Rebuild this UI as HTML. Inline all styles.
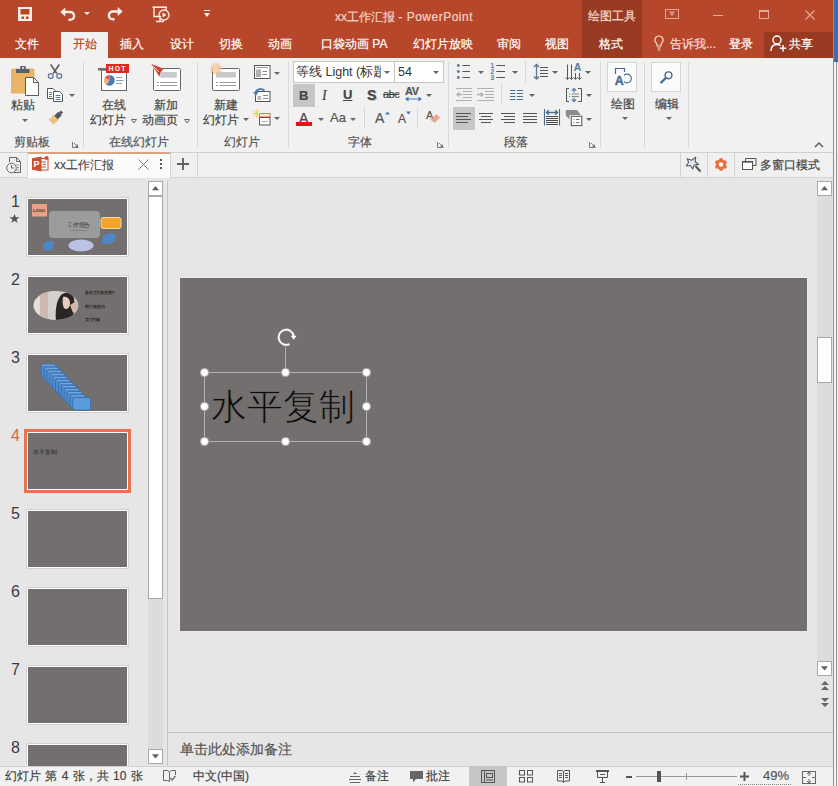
<!DOCTYPE html>
<html><head><meta charset="utf-8">
<style>
*{margin:0;padding:0;box-sizing:border-box}
html,body{width:838px;height:786px;overflow:hidden;background:#e6e6e6;font-family:"Liberation Sans",sans-serif;font-size:12px;color:#444}
.a{position:absolute}
svg{position:absolute;overflow:visible}
.t{position:absolute;white-space:nowrap;line-height:1}
#title{left:0;top:0;width:833px;height:58px;background:#b7472a}
.tab{position:absolute;top:37px;color:#fff;font-size:12px;line-height:14px;white-space:nowrap}
#ribbon{left:0;top:58px;width:833px;height:94px;background:#f1f1f1}
.sep{position:absolute;top:62px;width:1px;height:86px;background:#dadada}
.gl{position:absolute;top:135px;font-size:12px;line-height:14px;color:#555;white-space:nowrap}
.rl{position:absolute;font-size:12px;line-height:14px;color:#444;white-space:nowrap}
.dd{position:absolute;width:0;height:0;border-left:3px solid transparent;border-right:3px solid transparent;border-top:3px solid #666}
.sl{position:absolute;top:769px;font-size:12px;line-height:14px;color:#444;white-space:nowrap}
.th{position:absolute;left:26px;width:103px;height:60px;background:#736f6e;border:1px solid #d2d2d2;box-shadow:inset 0 0 0 1px #fff}
.num{position:absolute;left:11px;font-size:16px;line-height:16px;color:#3c3c3c}
.tab,.gl,.rl,.sl,.t{-webkit-text-stroke:0.2px currentColor}
.ns{-webkit-text-stroke:0 !important}
</style></head><body>
<!-- ============ TITLE BAR ============ -->
<div id="title" class="a"></div>
<div class="a" style="left:582px;top:0;width:60px;height:58px;background:#983b22"></div>
<div class="a" style="left:764px;top:32px;width:69px;height:26px;background:#983b22"></div>
<!-- right window edge -->
<div class="a" style="left:833px;top:0;width:1px;height:786px;background:#8f8f8f"></div>
<div class="a" style="left:834px;top:0;width:4px;height:62px;background:#3f6ea8"></div>
<div class="a" style="left:834px;top:62px;width:4px;height:724px;background:#f4f4f4"></div>
<div class="a" style="left:836px;top:62px;width:1px;height:724px;background:#8f8f8f"></div>

<!-- QAT: save -->
<svg style="left:18px;top:7px" width="14" height="14" viewBox="0 0 14 14">
 <rect x="0" y="0" width="14" height="14" fill="#fbeee9"/>
 <rect x="2.5" y="2" width="9" height="5.5" fill="#b7472a"/>
 <rect x="3.5" y="9.5" width="2.5" height="2.5" fill="#b7472a"/>
 <rect x="8" y="9.5" width="2.5" height="2.5" fill="#b7472a"/>
</svg>
<!-- undo -->
<svg style="left:60px;top:7px" width="16" height="14" viewBox="0 0 16 14">
 <path d="M4,5H10.2A3.9,3.9 0 0 1 10.2,12.8H8.5" fill="none" stroke="#fbeee9" stroke-width="2.4"/>
 <path d="M0.3,5L5.3,0.5V9.5Z" fill="#fbeee9"/>
</svg>
<div class="dd" style="left:84px;top:12px;border-top-color:#fbeee9"></div>
<!-- redo -->
<svg style="left:107px;top:7px" width="16" height="14" viewBox="0 0 16 14">
 <path d="M12,4.5H5.8A3.9,3.9 0 0 0 5.8,12.3H7.5" fill="none" stroke="#fbeee9" stroke-width="2.4"/>
 <path d="M15.7,4.5L10.7,0V9Z" fill="#fbeee9"/>
</svg>
<!-- slideshow from start -->
<svg style="left:152px;top:6px" width="18" height="17" viewBox="0 0 18 17">
 <path d="M0.5,1.2H15" stroke="#fbeee9" stroke-width="1.6"/>
 <path d="M2,1.5V10.5H9" fill="none" stroke="#fbeee9" stroke-width="1.3"/>
 <path d="M14,1.5V5" fill="none" stroke="#fbeee9" stroke-width="1.3"/>
 <circle cx="12" cy="9" r="5" fill="none" stroke="#fbeee9" stroke-width="1.3"/>
 <path d="M10.5,6.5L14.5,9L10.5,11.5Z" fill="#fbeee9"/>
 <path d="M8,11V15M4,15.5H12" stroke="#fbeee9" stroke-width="1.3"/>
</svg>
<!-- customize QAT -->
<svg style="left:204px;top:10px" width="6" height="8" viewBox="0 0 6 8">
 <path d="M0,0.5H6" stroke="#fbeee9" stroke-width="1"/>
 <path d="M0,3H6L3,7Z" fill="#fbeee9"/>
</svg>

<div class="t" style="left:335px;top:9.5px;font-size:12px;line-height:14px;color:#f6d5ca">xx工作汇报 <span style="letter-spacing:0.5px">- PowerPoint</span></div>
<div class="t" style="left:588px;top:9px;font-size:12px;line-height:14px;color:#f6dcd3">绘图工具</div>

<!-- window controls -->
<svg style="left:665px;top:9px" width="14" height="10" viewBox="0 0 14 10">
 <rect x="0.5" y="0.5" width="13" height="9" fill="none" stroke="#e7a493" stroke-width="1"/>
 <path d="M4,3H10M7,3V7M5,5H9" stroke="#e7a493" stroke-width="1"/>
</svg>
<div class="a" style="left:713px;top:15px;width:10px;height:1px;background:#eaa897"></div>
<div class="a" style="left:759px;top:10px;width:10px;height:9px;border:1px solid #eaa897;border-top-width:2px"></div>
<svg style="left:805px;top:10px" width="10" height="10" viewBox="0 0 10 10">
 <path d="M0.5,0.5L9.5,9.5M9.5,0.5L0.5,9.5" stroke="#eaa897" stroke-width="1.2"/>
</svg>

<!-- ============ TABS ============ -->
<div class="tab" style="left:15px">文件</div>
<div class="a" style="left:61px;top:32px;width:47px;height:26px;background:#f1f1f1"></div>
<div class="tab" style="left:73px;color:#b7472a">开始</div>
<div class="tab" style="left:120px">插入</div>
<div class="tab" style="left:170px">设计</div>
<div class="tab" style="left:219px">切换</div>
<div class="tab" style="left:268px">动画</div>
<div class="tab" style="left:321px">口袋动画 PA</div>
<div class="tab" style="left:413px">幻灯片放映</div>
<div class="tab" style="left:497px">审阅</div>
<div class="tab" style="left:545px">视图</div>
<div class="tab" style="left:599px">格式</div>
<!-- lightbulb -->
<svg style="left:654px;top:35px" width="10" height="16" viewBox="0 0 10 16">
 <path d="M5,1A4,4 0 0 0 2.2,7.9C3,8.8 3.2,9.6 3.2,11H6.8C6.8,9.6 7,8.8 7.8,7.9A4,4 0 0 0 5,1Z" fill="none" stroke="#f6dcd3" stroke-width="1.2"/>
 <path d="M3.2,13H6.8M3.8,15H6.2" stroke="#f6dcd3" stroke-width="1.2"/>
</svg>
<div class="tab" style="left:670px;color:#f6dcd3">告诉我...</div>
<div class="tab" style="left:729px">登录</div>
<!-- share person icon -->
<svg style="left:770px;top:35px" width="17" height="17" viewBox="0 0 17 17">
 <circle cx="7" cy="5" r="4" fill="none" stroke="#fff" stroke-width="1.5"/>
 <path d="M1,16C1,11.5 3.5,9.5 7,9.5C8.5,9.5 9.5,9.8 10.5,10.5" fill="none" stroke="#fff" stroke-width="1.5"/>
 <path d="M13,10V16.5M9.8,13.2H16.2" stroke="#fff" stroke-width="1.5"/>
</svg>
<div class="tab" style="left:789px">共享</div>

<!-- ============ RIBBON ============ -->
<div id="ribbon" class="a"></div>
<div class="sep" style="left:83px"></div>
<div class="sep" style="left:197px"></div>
<div class="sep" style="left:288px"></div>
<div class="sep" style="left:448px"></div>
<div class="sep" style="left:600px"></div>
<div class="sep" style="left:644px"></div>
<div class="sep" style="left:688px"></div>
<div class="gl" style="left:14px">剪贴板</div>
<div class="gl" style="left:109px">在线幻灯片</div>
<div class="gl" style="left:224px">幻灯片</div>
<div class="gl" style="left:348px">字体</div>
<div class="gl" style="left:504px">段落</div>
<!-- clipboard group -->
<svg style="left:11px;top:66px" width="29" height="30" viewBox="0 0 29 30">
 <path d="M0,4.5Q0,2.5 2,2.5H21.5Q23.5,2.5 23.5,4.5V27.5H0Z" fill="#e9b466"/>
 <path d="M5,3H18.5V7H5Z" fill="#55626f"/>
 <path d="M9.3,0H14.7V3.5H9.3Z" fill="#55626f"/>
 <rect x="11" y="1.2" width="2" height="1.6" fill="#f1f1f1"/>
 <path d="M14.5,11.5H22.5L27.5,16.5V29.5H14.5Z" fill="#fff" stroke="#5a5a5a" stroke-width="1"/>
 <path d="M22.5,11.5V16.5H27.5" fill="none" stroke="#5a5a5a" stroke-width="1"/>
</svg>
<div class="rl" style="left:11px;top:98px">粘贴</div>
<div class="dd" style="left:22px;top:119px"></div>
<!-- scissors -->
<svg style="left:48px;top:64px" width="15" height="15" viewBox="0 0 15 15">
 <path d="M2.7,0.5L8.8,9.5M11.3,0.5L5.2,9.5" stroke="#5a5a5a" stroke-width="1.5"/>
 <circle cx="2.8" cy="12" r="2.4" fill="#f1f1f1" stroke="#5d7894" stroke-width="1.3"/>
 <circle cx="11.2" cy="12" r="2.4" fill="#f1f1f1" stroke="#5d7894" stroke-width="1.3"/>
</svg>
<!-- copy -->
<svg style="left:47px;top:88px" width="16" height="14" viewBox="0 0 16 14">
 <path d="M0.5,0.5H6L8,2.5V10.5H0.5Z" fill="#fff" stroke="#555" stroke-width="1"/>
 <path d="M6.5,3.5H12.5L15.5,6.5V13.5H6.5Z" fill="#fff" stroke="#555" stroke-width="1"/>
 <path d="M2,4.5H5M2,6.5H5M2,8.5H5" stroke="#777" stroke-width="1"/><path d="M8.5,7.5H13.5M8.5,9.5H13.5M8.5,11.5H13.5" stroke="#4a7cb5" stroke-width="1"/>
</svg>
<div class="dd" style="left:69px;top:94px"></div>
<!-- format painter -->
<svg style="left:48px;top:110px" width="15" height="15" viewBox="0 0 15 15">
 <path d="M14,1.5L12,3.5" stroke="#50565f" stroke-width="3"/>
 <path d="M7.5,11.5L3.5,7.5L7.5,3.5L11.5,7.5Z" fill="none"/>
 <path d="M8.2,7.2L3.2,12.2" stroke="#ebc47c" stroke-width="7"/>
 <path d="M12,3.5L8,7.5" stroke="#50565f" stroke-width="5"/>
</svg>
<svg style="left:72px;top:142px" width="7" height="6" viewBox="0 0 7 6">
 <path d="M0.5,0V5.5H6.5" fill="none" stroke="#777" stroke-width="1"/>
 <path d="M2,1L6,5" stroke="#777" stroke-width="1"/><path d="M6,2V5H3Z" fill="#777"/>
</svg>

<!-- online slides group -->
<svg style="left:100px;top:63px" width="30" height="29" viewBox="0 0 30 29">
 <rect x="1.5" y="7" width="25" height="20.5" fill="#fff" stroke="#666" stroke-width="1"/>
 <rect x="-2" y="5" width="10" height="2.5" fill="#6b6f72"/>
 <rect x="6" y="1" width="23" height="9" fill="#e02a1f"/>
 <text x="17.6" y="8.2" font-family="Liberation Sans" font-size="6.8" font-weight="bold" fill="#fff" text-anchor="middle" letter-spacing="1.3">HOT</text>
 <path d="M9.4,17.3L9.40,11.90A5.4,5.4 0 1 1 6.30,21.72Z" fill="#4a7cb5"/>
 <path d="M9.4,17.3L6.30,21.72A5.4,5.4 0 0 1 4.72,14.60Z" fill="#eab07a"/>
 <path d="M9.4,17.3L4.72,14.60A5.4,5.4 0 0 1 9.40,11.90Z" fill="#e0593c"/>
 <path d="M16,14.5H22M16,17.5H23.5M16,20.5H22" stroke="#8aa0b8" stroke-width="1"/>
</svg>
<div class="rl" style="left:102px;top:98px">在线</div>
<div class="rl" style="left:90px;top:113px">幻灯片</div>
<svg style="left:131px;top:119px" width="6" height="5" viewBox="0 0 6 5"><path d="M0.5,0.5H5.5L3,4Z" fill="none" stroke="#666" stroke-width="1"/></svg>
<svg style="left:150px;top:63px" width="32" height="29" viewBox="0 0 32 29">
 <rect x="3.5" y="5.5" width="27" height="22" rx="1" fill="#fff" stroke="#666" stroke-width="1"/>
 <rect x="10.3" y="9" width="16.5" height="5.7" fill="#cacbd0"/>
 <path d="M6.8,19.5H8.8M10,19.5H27M6.8,22.5H8.8M10,22.5H27" stroke="#9a9a9a" stroke-width="1"/>
 <path d="M1.3,1L13.7,5.8L10.5,9.5L9.4,13.7Z" fill="#c8472d"/>
 <path d="M3.2,3.2L8.8,9" stroke="#fff" stroke-width="0.8"/>
</svg>
<div class="rl" style="left:154px;top:98px">新加</div>
<div class="rl" style="left:142px;top:113px">动画页</div>
<svg style="left:184px;top:119px" width="6" height="5" viewBox="0 0 6 5"><path d="M0.5,0.5H5.5L3,4Z" fill="none" stroke="#666" stroke-width="1"/></svg>

<!-- slides group -->
<svg style="left:209px;top:62px" width="32" height="30" viewBox="0 0 32 30">
 <rect x="3.5" y="6.5" width="27" height="22" rx="1" fill="#fff" stroke="#666" stroke-width="1"/>
 <rect x="7" y="10" width="20" height="5.5" fill="#c9c9c9"/>
 <path d="M7,20.5H9M10.5,20.5H27M7,23.5H9M10.5,23.5H27" stroke="#999" stroke-width="1"/>
 <path d="M9.50,7.00L13.30,7.00 M9.17,8.25L12.46,10.15 M8.25,9.17L10.15,12.46 M7.00,9.50L7.00,13.30 M5.75,9.17L3.85,12.46 M4.83,8.25L1.54,10.15 M4.50,7.00L0.70,7.00 M4.83,5.75L1.54,3.85 M5.75,4.83L3.85,1.54 M7.00,4.50L7.00,0.70 M8.25,4.83L10.15,1.54 M9.17,5.75L12.46,3.85" stroke="#f2bd8c" stroke-width="1.2"/>
 <circle cx="7" cy="7" r="2.8" fill="#f9d2a8"/>
</svg>
<div class="rl" style="left:214px;top:98px">新建</div>
<div class="rl" style="left:203px;top:113px">幻灯片</div>
<div class="dd" style="left:243px;top:118px"></div>
<!-- layout -->
<svg style="left:254px;top:65px" width="17" height="15" viewBox="0 0 17 15">
 <rect x="0.5" y="0.5" width="15.5" height="13" fill="#fff" stroke="#555" stroke-width="1"/>
 <path d="M2.5,2.5H14" stroke="#999" stroke-width="1"/>
 <rect x="2" y="4.5" width="5" height="7.5" fill="#b0b0b0"/>
 <path d="M8.5,6.5H13M8.5,9.5H13" stroke="#888" stroke-width="1"/>
</svg>
<div class="dd" style="left:274px;top:72px"></div>
<!-- reset -->
<svg style="left:253px;top:87px" width="18" height="15" viewBox="0 0 18 15">
 <rect x="2.5" y="4.5" width="14.5" height="10" fill="#fff" stroke="#555" stroke-width="1"/>
 <rect x="4.5" y="9" width="3.5" height="4" fill="#b5b5b5"/>
 <path d="M10,8.5H15M10,11.5H15" stroke="#888" stroke-width="1"/>
 <rect x="1" y="0" width="12" height="4" fill="#f1f1f1"/>
 <path d="M2.5,6.5C3,2.5 7.5,0.5 11.5,3.5" fill="none" stroke="#4a7cb5" stroke-width="1.8"/>
 <path d="M0,5.5L3,9L5.5,4.5Z" fill="#4a7cb5"/>
</svg>
<!-- section -->
<svg style="left:253px;top:109px" width="18" height="18" viewBox="0 0 18 18">
 <rect x="6.5" y="4.5" width="10.5" height="3.5" fill="#fbe6cf" stroke="#e0704e" stroke-width="1"/>
 <rect x="6.5" y="8.5" width="10.5" height="7.5" fill="#fff" stroke="#555" stroke-width="1"/>
 <path d="M8.5,12.5H15" stroke="#aaa" stroke-width="1"/>
 <path d="M4.90,4.50L7.50,4.50 M4.49,5.49L6.33,7.33 M3.50,5.90L3.50,8.50 M2.51,5.49L0.67,7.33 M2.10,4.50L-0.50,4.50 M2.51,3.51L0.67,1.67 M3.50,3.10L3.50,0.50 M4.49,3.51L6.33,1.67" stroke="#f2c46a" stroke-width="1"/>
 <circle cx="3.5" cy="4.5" r="1.5" fill="#f5d070"/>
</svg>
<div class="dd" style="left:274px;top:117px"></div>

<!-- font group -->
<div class="a" style="left:293px;top:61px;width:102px;height:22px;background:#fff;border:1px solid #c6c6c6"></div>
<div class="a" style="left:394px;top:61px;width:50px;height:22px;background:#fff;border:1px solid #c6c6c6"></div>
<div class="rl ns" style="left:296px;top:65px;font-size:12.5px;color:#333">等线 Light (标题</div>
<div class="a" style="left:381px;top:62px;width:13px;height:20px;background:#fff"></div>
<div class="dd" style="left:384px;top:71px"></div>
<div class="rl ns" style="left:398px;top:65px;font-size:12.5px;color:#333">54</div>
<div class="dd" style="left:433px;top:71px"></div>
<!-- row 2 -->
<div class="a" style="left:293px;top:84px;width:22px;height:23px;background:#c6c6c6"></div>
<div class="t" style="left:299px;top:89px;font-size:13px;font-weight:bold;color:#444">B</div>
<div class="t" style="left:322px;top:89px;font-size:14px;font-family:'Liberation Serif';font-style:italic;color:#444">I</div>
<div class="t" style="left:343px;top:88px;font-size:13px;font-weight:bold;color:#444;text-decoration:underline">U</div>
<div class="t" style="left:367px;top:88px;font-size:14px;font-weight:bold;color:#444;text-shadow:1px 1px 0 #bbb">S</div>
<div class="t" style="left:383px;top:89px;font-size:11px;color:#444;letter-spacing:-0.5px;text-decoration:line-through">abc</div>
<div class="t" style="left:405px;top:86px;font-size:11px;font-weight:bold;color:#555;letter-spacing:-0.5px">AV</div>
<svg style="left:405px;top:96px" width="17" height="6" viewBox="0 0 17 6">
 <path d="M1,3H16" stroke="#4a7cb5" stroke-width="1"/><path d="M0,3L3.5,0.5V5.5ZM17,3L13.5,0.5V5.5Z" fill="#4a7cb5"/>
</svg>
<div class="dd" style="left:426px;top:94px"></div>
<!-- row 3 -->
<div class="t" style="left:299px;top:111px;font-size:14px;color:#444">A</div>
<div class="a" style="left:296px;top:122px;width:16px;height:4px;background:#e8101a"></div>
<div class="dd" style="left:318px;top:118px"></div>
<div class="t" style="left:330px;top:111px;font-size:13px;color:#555">Aa</div>
<div class="dd" style="left:350px;top:118px"></div>
<div class="a" style="left:364px;top:108px;width:1px;height:20px;background:#d8d8d8"></div>
<div class="t" style="left:375px;top:111px;font-size:14px;color:#555">A</div>
<svg style="left:385px;top:111px" width="5" height="4" viewBox="0 0 5 4"><path d="M0,3.5L2.5,0.5L5,3.5Z" fill="#4a7cb5"/></svg>
<div class="t" style="left:398px;top:113px;font-size:12px;color:#555">A</div>
<svg style="left:406px;top:111px" width="5" height="4" viewBox="0 0 5 4"><path d="M0,0.5H5L2.5,3.5Z" fill="#4a7cb5"/></svg>
<div class="a" style="left:417px;top:108px;width:1px;height:20px;background:#d8d8d8"></div>
<div class="t" style="left:426px;top:110px;font-size:11px;color:#555">A</div>
<svg style="left:428px;top:110px" width="13" height="13" viewBox="0 0 13 13">
 <path d="M3,9.5L8.5,4L12,7.5L6.5,13Z" fill="#e9a58c"/>
 <path d="M4.5,11L2,8.5L5,5.5" fill="none" stroke="#e9a58c" stroke-width="1"/>
</svg>
<svg style="left:437px;top:142px" width="7" height="6" viewBox="0 0 7 6">
 <path d="M0.5,0V5.5H6.5" fill="none" stroke="#777" stroke-width="1"/>
 <path d="M2,1L6,5" stroke="#777" stroke-width="1"/><path d="M6,2V5H3Z" fill="#777"/>
</svg>

<!-- paragraph group -->
<svg style="left:456px;top:64px" width="16" height="16" viewBox="0 0 16 16">
 <g fill="#5a7894"><circle cx="2.3" cy="1.5" r="1.4"/><circle cx="2.3" cy="7.5" r="1.4"/><circle cx="2.3" cy="13.5" r="1.4"/></g>
 <path d="M6.4,1.5H14M6.4,7.5H14M6.4,13.5H14" stroke="#555" stroke-width="1"/>
</svg>
<div class="dd" style="left:478px;top:71px"></div>
<svg style="left:490px;top:64px" width="16" height="17" viewBox="0 0 16 17">
 <g font-family="Liberation Sans" font-size="6.5" font-weight="bold" fill="#5a7894">
 <text x="0.6" y="4">1</text><text x="0.6" y="10">2</text><text x="0.6" y="16">3</text></g>
 <path d="M6.3,1.5H15M6.3,7.5H15M6.3,13.5H15" stroke="#555" stroke-width="1"/>
</svg>
<div class="dd" style="left:512px;top:71px"></div>
<div class="a" style="left:525px;top:61px;width:1px;height:22px;background:#d8d8d8"></div>
<svg style="left:533px;top:63px" width="16" height="18" viewBox="0 0 16 18">
 <path d="M3.5,1.5V16" stroke="#5a7894" stroke-width="1.3"/>
 <path d="M1,4L3.5,1.5L6,4M1,13.5L3.5,16L6,13.5" fill="none" stroke="#5a7894" stroke-width="1.3"/>
 <path d="M7,4.5H15M7,7.5H15M7,10.5H15M7,13.5H15" stroke="#555" stroke-width="1"/>
</svg>
<div class="dd" style="left:552px;top:71px"></div>
<svg style="left:565px;top:63px" width="17" height="18" viewBox="0 0 17 18">
 <text x="8.8" y="8.4" font-family="Liberation Sans" font-size="10.5" font-weight="bold" fill="#5a7894">A</text>
 <path d="M2.5,1.5V16M6.5,1.5V16M10.5,10V16M14.5,10V16" stroke="#555" stroke-width="1"/>
 <path d="M0.8,14.5L2.5,16.5L4.2,14.5M4.8,14.5L6.5,16.5L8.2,14.5M8.8,14.5L10.5,16.5L12.2,14.5M12.8,14.5L14.5,16.5L16.2,14.5" fill="none" stroke="#555" stroke-width="1"/>
</svg>
<div class="dd" style="left:585px;top:71px"></div>
<!-- row2 -->
<svg style="left:456px;top:87px" width="16" height="15" viewBox="0 0 16 15">
 <path d="M0,1.5H16M7,4.5H16M7,7.5H16M7,10.5H16M0,13.5H16" stroke="#b0b0b0" stroke-width="1"/>
 <path d="M2,7.5H6" stroke="#b0b0b0" stroke-width="1.6"/><path d="M0,7.5L3.2,4.8V10.2Z" fill="#b0b0b0"/>
</svg>
<svg style="left:477px;top:87px" width="17" height="15" viewBox="0 0 17 15">
 <path d="M0,1.5H17M8,4.5H17M8,7.5H17M8,10.5H17M0,13.5H17" stroke="#b0b0b0" stroke-width="1"/>
 <path d="M0,7.5H5" stroke="#b0b0b0" stroke-width="1.6"/><path d="M7,7.5L3.8,4.8V10.2Z" fill="#b0b0b0"/>
</svg>
<div class="a" style="left:501px;top:84px;width:1px;height:21px;background:#d8d8d8"></div>
<svg style="left:509px;top:88px" width="15" height="13" viewBox="0 0 15 13">
 <path d="M1,2.5H6.5M1,5.5H6.5M1,8.5H6.5M1,11.5H6.5M8,2.5H14M8,5.5H14M8,8.5H14M8,11.5H14" stroke="#4a6f99" stroke-width="1.2"/>
</svg>
<div class="dd" style="left:529px;top:94px"></div>
<svg style="left:565px;top:87px" width="18" height="16" viewBox="0 0 18 16">
 <path d="M4,1.5H1.5V14.5H4M13,1.5H16.5V14.5H13" fill="none" stroke="#555" stroke-width="1"/>
 <path d="M9,1.5V5.5M9,10.5V14.5" stroke="#5a7894" stroke-width="1.2"/>
 <path d="M6.8,3.7L9,1.5L11.2,3.7M6.8,12.3L9,14.5L11.2,12.3" fill="none" stroke="#5a7894" stroke-width="1.2"/>
 <path d="M4,7H5M6.5,7H14M4,9.5H5M6.5,9.5H14" stroke="#888" stroke-width="1"/>
</svg>
<div class="dd" style="left:586px;top:94px"></div>
<!-- row3 -->
<div class="a" style="left:453px;top:107px;width:22px;height:23px;background:#c6c6c6"></div>
<svg style="left:456px;top:112px" width="16" height="12" viewBox="0 0 16 12">
 <path d="M0,1.5H15M0,4.5H12M0,7.5H15M0,10.5H12" stroke="#555" stroke-width="1"/>
</svg>
<svg style="left:479px;top:112px" width="15" height="12" viewBox="0 0 15 12">
 <path d="M0,1.5H14M2,4.5H12M0,7.5H14M2,10.5H12" stroke="#555" stroke-width="1"/>
</svg>
<svg style="left:501px;top:112px" width="15" height="12" viewBox="0 0 15 12">
 <path d="M0,1.5H14M3,4.5H14M0,7.5H14M3,10.5H14" stroke="#555" stroke-width="1"/>
</svg>
<svg style="left:523px;top:112px" width="15" height="12" viewBox="0 0 15 12">
 <path d="M0,1.5H14M0,4.5H14M0,7.5H14M0,10.5H14" stroke="#555" stroke-width="1"/>
</svg>
<svg style="left:543px;top:109px" width="18" height="17" viewBox="0 0 18 17">
 <path d="M1.5,0V16.5M16.5,0V16.5" stroke="#4a6b8f" stroke-width="1.1"/>
 <path d="M3.5,3.5H14.5" stroke="#4a6b8f" stroke-width="1.5"/>
 <path d="M5.8,1.2L3.5,3.5L5.8,5.8M12.2,1.2L14.5,3.5L12.2,5.8" fill="none" stroke="#4a6b8f" stroke-width="1.4"/>
 <path d="M3,7.5H15M3,9.5H15M3,11.5H15M3,13.5H15M3,15.5H15" stroke="#4d4d4d" stroke-width="1"/>
</svg>
<svg style="left:565px;top:109px" width="18" height="17" viewBox="0 0 18 17">
 <path d="M0.8,1H12L15.8,6H4.5L4.5,10.4L0.8,6.5Z" fill="#8c8c8c"/>
 <rect x="6.3" y="7.3" width="10.5" height="9.3" fill="#fff" stroke="#555" stroke-width="1"/>
 <path d="M8.5,10.5H9.5M11,10.5H14.5M8.5,13.5H9.5M11,13.5H14.5" stroke="#777" stroke-width="1"/>
</svg>
<div class="dd" style="left:586px;top:118px"></div>
<svg style="left:589px;top:142px" width="7" height="6" viewBox="0 0 7 6">
 <path d="M0.5,0V5.5H6.5" fill="none" stroke="#777" stroke-width="1"/>
 <path d="M2,1L6,5" stroke="#777" stroke-width="1"/><path d="M6,2V5H3Z" fill="#777"/>
</svg>

<!-- drawing / editing -->
<div class="a" style="left:607px;top:62px;width:30px;height:30px;background:#fbfbfb;border:1px solid #d6d6d6"></div>
<svg style="left:614px;top:68px" width="18" height="18" viewBox="0 0 18 18">
 <path d="M1.5,6V0.5H10.5V4" fill="none" stroke="#4a6b8f" stroke-width="1.2"/>
 <circle cx="13" cy="10.5" r="4.3" fill="none" stroke="#4a6b8f" stroke-width="1.2"/>
 <rect x="1" y="7" width="9" height="11" fill="#fbfbfb"/>
 <text x="0.8" y="16.8" font-family="Liberation Sans" font-size="12.5" font-weight="bold" fill="#4a6b8f" stroke="#4a6b8f" stroke-width="0.4">A</text>
</svg>
<div class="rl" style="left:611px;top:97px">绘图</div>
<div class="dd" style="left:622px;top:117px"></div>
<div class="a" style="left:651px;top:62px;width:30px;height:30px;background:#fbfbfb;border:1px solid #d6d6d6"></div>
<svg style="left:659px;top:70px" width="14" height="14" viewBox="0 0 14 14">
 <circle cx="9.5" cy="5.3" r="3.4" fill="none" stroke="#4a6b8f" stroke-width="1.4"/>
 <path d="M6.8,8L2.2,12.5" stroke="#4a6b8f" stroke-width="2.4" stroke-linecap="round"/>
</svg>
<div class="rl" style="left:655px;top:97px">编辑</div>
<div class="dd" style="left:666px;top:117px"></div>
<svg style="left:814px;top:142px" width="10" height="6" viewBox="0 0 10 6">
 <path d="M1,5L5,1L9,5" fill="none" stroke="#555" stroke-width="1.4"/>
</svg>

<!-- RIBBON_CONTENT -->

<!-- ============ DOC BAR ============ -->
<div class="a" style="left:0;top:152px;width:833px;height:1px;background:#d0d0d0"></div>
<div class="a" style="left:0;top:153px;width:833px;height:24px;background:#f0f0f0"></div>
<div class="a" style="left:0;top:177px;width:833px;height:1px;background:#d4d4d4"></div>
<!-- history icon -->
<svg style="left:6px;top:157px" width="16" height="17" viewBox="0 0 16 17">
 <path d="M3.5,5V0.5H10.5L14.5,4.5V15.5H8" fill="none" stroke="#666" stroke-width="1"/>
 <path d="M10.5,0.5V4.5H14.5" fill="none" stroke="#666" stroke-width="1"/>
 <circle cx="5.5" cy="11" r="4.8" fill="#f0f0f0" stroke="#666" stroke-width="1"/>
 <path d="M5.5,8V11H8" fill="none" stroke="#666" stroke-width="1"/>
 <path d="M10,8H13M10,10.5H13M10,13H13" stroke="#999" stroke-width="1"/>
</svg>
<div class="a" style="left:27px;top:153px;width:1px;height:24px;background:#dcdcdc"></div>
<div class="a" style="left:28px;top:152px;width:142px;height:26px;background:#fbfbfb;border-top:2px solid #dba27f"></div>
<!-- ppt icon -->
<svg style="left:32px;top:156px" width="17" height="16" viewBox="0 0 17 16">
 <rect x="7" y="2.5" width="9" height="11.5" fill="#fff" stroke="#c9502f" stroke-width="1"/>
 <path d="M9,6H14M11,8.5H14M9,11H14" stroke="#c9502f" stroke-width="1"/>
 <path d="M0,2.3L9.5,0.5V15.5L0,13.7Z" fill="#c9502f"/>
 <text x="1.6" y="11.3" font-family="Liberation Sans" font-size="9" font-weight="bold" fill="#fff">P</text>
 <circle cx="14.5" cy="2" r="2" fill="#c9502f"/>
</svg>
<div class="t" style="left:54px;top:158px;font-size:12px;line-height:14px;color:#444;-webkit-text-stroke:0.1px #444">xx工作汇报</div>
<svg style="left:138px;top:159px" width="11" height="11" viewBox="0 0 11 11">
 <path d="M0.5,0.5L10.5,10.5M10.5,0.5L0.5,10.5" stroke="#777" stroke-width="1"/>
</svg>
<div class="a" style="left:160px;top:159px;width:2px;height:2px;background:#555"></div>
<div class="a" style="left:160px;top:163px;width:2px;height:2px;background:#555"></div>
<div class="a" style="left:160px;top:167px;width:2px;height:2px;background:#555"></div>
<div class="a" style="left:170px;top:153px;width:1px;height:24px;background:#d4d4d4"></div>
<svg style="left:177px;top:158px" width="12" height="12" viewBox="0 0 12 12">
 <path d="M6,0V12M0,6H12" stroke="#606060" stroke-width="1.9"/>
</svg>
<div class="a" style="left:197px;top:153px;width:1px;height:24px;background:#d4d4d4"></div>
<!-- right: magic wand -->
<div class="a" style="left:680px;top:153px;width:1px;height:24px;background:#d4d4d4"></div>
<svg style="left:684px;top:155px" width="18" height="18" viewBox="0 0 18 18">
 <path d="M11.5,11L16.5,16.5" stroke="#555" stroke-width="2"/>
 <path d="M3.2,3.7L7.5,5.3L11.7,2.2L11.2,6.8L14.7,9.4L10.2,10.0L8.7,14.0L6.3,10.5L2.2,11.0L4.6,7.3Z" fill="#dfe7f2" stroke="#5a5a5a" stroke-width="1.1" stroke-linejoin="round"/>
</svg>
<div class="a" style="left:707px;top:153px;width:1px;height:24px;background:#d4d4d4"></div>
<svg style="left:714px;top:158px" width="14" height="13" viewBox="0 0 14 13">
 <g fill="#e8703e"><circle cx="7" cy="6.5" r="5"/><circle cx="10.81" cy="8.70" r="2"/><circle cx="7.00" cy="10.90" r="2"/><circle cx="3.19" cy="8.70" r="2"/><circle cx="3.19" cy="4.30" r="2"/><circle cx="7.00" cy="2.10" r="2"/><circle cx="10.81" cy="4.30" r="2"/></g>
 <circle cx="7" cy="6.5" r="2.3" fill="#f4f4f4"/>
</svg>
<div class="a" style="left:734px;top:153px;width:1px;height:24px;background:#d4d4d4"></div>
<svg style="left:742px;top:157px" width="16" height="14" viewBox="0 0 16 14">
 <path d="M3.5,4V1.5H14V8.5H11" fill="none" stroke="#555" stroke-width="1"/>
 <rect x="0.5" y="4.5" width="10" height="8" fill="#fff" stroke="#555" stroke-width="1"/>
 <path d="M1,5.2H10" stroke="#555" stroke-width="1"/>
</svg>
<div class="t" style="left:760px;top:158px;font-size:12px;line-height:14px;color:#444">多窗口模式</div>

<!-- DOCBAR_CONTENT -->

<!-- ============ MAIN ============ -->
<div class="a" style="left:0;top:178px;width:833px;height:588px;background:#e6e6e6"></div>
<!-- left panel scrollbar -->
<div class="a" style="left:148px;top:181px;width:15px;height:583px;background:#dcdcdc"></div>
<div class="a" style="left:148px;top:181px;width:15px;height:15px;background:#fff;border:1px solid #a8a8a8"></div>
<svg style="left:152px;top:186px" width="7" height="5" viewBox="0 0 7 5"><path d="M0,4.3L3.5,0L7,4.3Z" fill="#606060"/></svg>
<div class="a" style="left:148px;top:196px;width:15px;height:403px;background:#fff;border:1px solid #a8a8a8"></div>
<div class="a" style="left:148px;top:749px;width:15px;height:15px;background:#fff;border:1px solid #a8a8a8"></div>
<svg style="left:152px;top:754px" width="7" height="5" viewBox="0 0 7 5"><path d="M0,0.2H7L3.5,4.5Z" fill="#606060"/></svg>

<div class="a" style="left:167px;top:181px;width:1px;height:585px;background:#c6c6c6"></div>

<!-- thumbnails -->
<div class="num" style="left:11px;top:194px">1</div>
<svg style="left:9px;top:214px" width="11" height="9" viewBox="0 0 11 9"><path d="M5.5,0L6.8,3.3H10.5L7.5,5.5L8.6,9L5.5,6.8L2.4,9L3.5,5.5L0.5,3.3H4.2Z" fill="#555"/></svg>
<div class="th" style="top:197px"></div>
<svg style="left:28px;top:199px;overflow:hidden" width="99" height="56" viewBox="1 1 99 56">
 <rect x="5" y="6" width="15" height="12.5" fill="#e9a189"/>
 <text x="6" y="13.8" font-family="Liberation Sans" font-size="4.2" font-weight="bold" fill="#3a2a25">LOGO</text>
 <rect x="22" y="13" width="51" height="27" rx="4" fill="#9b9b9b"/>
 <text x="40" y="29.3" textLength="23" lengthAdjust="spacingAndGlyphs" font-family="Liberation Sans" font-size="5.6" fill="#3a3a3a">工作报告</text>
 <path d="M43,32.5H60" stroke="#707070" stroke-width="0.8" stroke-dasharray="1.5 0.5"/>
 <rect x="74" y="19.5" width="20" height="11" rx="2" fill="#f5a42a" stroke="#f3d9a6" stroke-width="1"/>
 <path d="M76,38C81,34 90,34 89,40C88,46 79,47 75,45Z" fill="#4f86c6"/>
 <path d="M27,42C27,47 26,53 21,53C17.5,53 16,50.5 16,48C16,44.5 19,43 21.5,43.2C23.5,43.3 25.5,43 27,42Z" fill="#4f86c6"/>
 <ellipse cx="54" cy="47.5" rx="12.5" ry="6" fill="#bcc2e6"/>
</svg>

<div class="num" style="left:11px;top:272px">2</div>
<div class="th" style="top:275px"></div>
<svg style="left:28px;top:277px;overflow:hidden" width="99" height="56" viewBox="1 2 99 56">
 <defs><clipPath id="ec"><ellipse cx="28.9" cy="30.4" rx="22.5" ry="14.5"/></clipPath>
 <linearGradient id="eg" x1="0" x2="1"><stop offset="0" stop-color="#e4e2e2"/><stop offset="1" stop-color="#c4bfbe"/></linearGradient></defs>
 <ellipse cx="28.9" cy="30.4" rx="22.5" ry="14.5" fill="url(#eg)"/>
 <g clip-path="url(#ec)">
  <rect x="13" y="12" width="8" height="34" fill="#cdb9b0"/>
  <rect x="21" y="12" width="6" height="34" fill="#d6cfcb"/>
  <path d="M29,46C28,37 29,26 34,20C39,16 46,17 47,24C48,31 47,38 45,46Z" fill="#2b2526"/>
  <path d="M36,22C40,21 43,24 43,28C43,32 41,34 38.5,34C36,33 35,29 36,22Z" fill="#e6cbbf"/>
  <path d="M43,30L48,27L50,33L46,38Z" fill="#d9b3a3"/>
 </g>
 <g font-family="Liberation Sans" font-size="4" font-weight="bold" fill="#2e2a2a">
  <text x="58" y="18.8" textLength="30" lengthAdjust="spacingAndGlyphs">题设文字描述图片</text>
  <text x="58" y="32.5" textLength="20" lengthAdjust="spacingAndGlyphs">图片描述内</text>
  <text x="58" y="46" textLength="15" lengthAdjust="spacingAndGlyphs">文字描</text>
 </g>
</svg>

<div class="num" style="left:11px;top:350px">3</div>
<div class="th" style="top:353px"></div>
<svg style="left:28px;top:355px;overflow:hidden" width="99" height="56" viewBox="1 1 99 56">
<g stroke="#3467a3" stroke-width="0.7">
<rect x="14.00" y="10.00" width="15" height="13" rx="1.5" fill="#4f8ccf"/>
<path d="M15.50,11.20H28.00" stroke="#8fb6e2" stroke-width="0.7"/>
<rect x="16.90" y="13.05" width="15" height="13" rx="1.5" fill="#4f8ccf"/>
<path d="M18.40,14.25H30.90" stroke="#8fb6e2" stroke-width="0.7"/>
<rect x="19.80" y="16.10" width="15" height="13" rx="1.5" fill="#4f8ccf"/>
<path d="M21.30,17.30H33.80" stroke="#8fb6e2" stroke-width="0.7"/>
<rect x="22.70" y="19.15" width="15" height="13" rx="1.5" fill="#4f8ccf"/>
<path d="M24.20,20.35H36.70" stroke="#8fb6e2" stroke-width="0.7"/>
<rect x="25.60" y="22.20" width="15" height="13" rx="1.5" fill="#4f8ccf"/>
<path d="M27.10,23.40H39.60" stroke="#8fb6e2" stroke-width="0.7"/>
<rect x="28.50" y="25.25" width="15" height="13" rx="1.5" fill="#4f8ccf"/>
<path d="M30.00,26.45H42.50" stroke="#8fb6e2" stroke-width="0.7"/>
<rect x="31.40" y="28.30" width="15" height="13" rx="1.5" fill="#4f8ccf"/>
<path d="M32.90,29.50H45.40" stroke="#8fb6e2" stroke-width="0.7"/>
<rect x="34.30" y="31.35" width="15" height="13" rx="1.5" fill="#4f8ccf"/>
<path d="M35.80,32.55H48.30" stroke="#8fb6e2" stroke-width="0.7"/>
<rect x="37.20" y="34.40" width="15" height="13" rx="1.5" fill="#4f8ccf"/>
<path d="M38.70,35.60H51.20" stroke="#8fb6e2" stroke-width="0.7"/>
<rect x="40.10" y="37.45" width="15" height="13" rx="1.5" fill="#4f8ccf"/>
<path d="M41.60,38.65H54.10" stroke="#8fb6e2" stroke-width="0.7"/>
<rect x="43.00" y="40.50" width="15" height="13" rx="1.5" fill="#4f8ccf"/>
<path d="M44.50,41.70H57.00" stroke="#8fb6e2" stroke-width="0.7"/>
<rect x="45.7" y="43.6" width="17.8" height="12.5" rx="2" fill="#5b9bdc"/>
</g>
</svg>

<div class="num" style="left:11px;top:428px;color:#d8663f">4</div>
<div class="th" style="top:431px"></div>
<div class="a" style="left:24px;top:429px;width:107px;height:64px;border:3px solid #e8714f"></div>
<div class="t ns" style="left:33px;top:449.5px;font-size:5.7px;color:#222">水平复制</div>

<div class="num" style="left:11px;top:506px">5</div>
<div class="th" style="top:509px"></div>
<div class="num" style="left:11px;top:584px">6</div>
<div class="th" style="top:587px"></div>
<div class="num" style="left:11px;top:662px">7</div>
<div class="th" style="top:665px"></div>
<div class="num" style="left:11px;top:740px">8</div>
<div class="th" style="top:743px"></div>
<!-- re-cover bottom beneath status -->

<!-- right scrollbar -->
<div class="a" style="left:817px;top:181px;width:15px;height:480px;background:#dcdcdc"></div>
<div class="a" style="left:817px;top:181px;width:15px;height:15px;background:#fff;border:1px solid #a8a8a8"></div>
<svg style="left:821px;top:186px" width="7" height="5" viewBox="0 0 7 5"><path d="M0,4.3L3.5,0L7,4.3Z" fill="#606060"/></svg>
<div class="a" style="left:817px;top:337px;width:15px;height:46px;background:#fff;border:1px solid #a8a8a8"></div>
<div class="a" style="left:817px;top:661px;width:15px;height:15px;background:#fff;border:1px solid #a8a8a8"></div>
<svg style="left:821px;top:666px" width="7" height="5" viewBox="0 0 7 5"><path d="M0,0.2H7L3.5,4.5Z" fill="#606060"/></svg>
<svg style="left:821px;top:681px" width="8" height="9" viewBox="0 0 8 9"><path d="M0,4L4,0L8,4ZM0,9L4,5L8,9Z" fill="#666"/></svg>
<svg style="left:821px;top:698px" width="8" height="9" viewBox="0 0 8 9"><path d="M0,0H8L4,4ZM0,5H8L4,9Z" fill="#666"/></svg>

<!-- notes -->
<div class="a" style="left:168px;top:732px;width:665px;height:1px;background:#c6c6c6"></div>
<div class="t" style="left:180px;top:741px;font-size:14.3px;line-height:16px;color:#555">单击此处添加备注</div>

<!-- MAIN_CONTENT -->

<!-- slide -->
<div class="a" style="left:179px;top:277px;width:629px;height:355px;background:#ebebeb"></div>
<div class="a" style="left:180px;top:278px;width:627px;height:353px;background:#736f6e"></div>
<div class="t" style="left:211px;top:389px;font-size:36px;color:#0a0a0a;-webkit-text-stroke:0.7px #736f6e">水平复制</div>
<svg style="left:190px;top:320px" width="190" height="135" viewBox="0 0 190 135">
 <path d="M14.5,52.5H176.5V121.5H14.5Z" fill="none" stroke="#b4b2b1" stroke-width="1"/>
 <path d="M95.5,27V52" stroke="#b4b2b1" stroke-width="1"/>
 <g fill="#fff" stroke="#a9a6a5" stroke-width="1.2">
  <circle cx="14.5" cy="52.5" r="4"/><circle cx="95.5" cy="52.5" r="4"/><circle cx="176.5" cy="52.5" r="4"/>
  <circle cx="14.5" cy="86.5" r="4"/><circle cx="176.5" cy="86.5" r="4"/>
  <circle cx="14.5" cy="121.5" r="4"/><circle cx="95.5" cy="121.5" r="4"/><circle cx="176.5" cy="121.5" r="4"/>
 </g>
 <path d="M99.6,24.1A7.6,7.6 0 1 1 103.7,16" fill="none" stroke="#8a8786" stroke-width="3.2"/>
 <path d="M99.6,24.1A7.6,7.6 0 1 1 103.7,16" fill="none" stroke="#fff" stroke-width="1.7"/>
 <path d="M100.8,15.8H106.6L103.7,19.8Z" fill="#fff"/>
</svg>

<!-- ============ STATUS ============ -->
<div class="a" style="left:0;top:766px;width:833px;height:1px;background:#d2d2d2"></div>
<div class="a" style="left:0;top:767px;width:833px;height:19px;background:#f1f1f1"></div>
<div class="sl" style="left:5px;word-spacing:1px">幻灯片 第 4 张，共 10 张</div>
<svg style="left:163px;top:770px" width="13" height="12" viewBox="0 0 13 12">
 <path d="M0.5,0.5H4.5L6.5,2V11.5L4.5,10.5H0.5Z" fill="none" stroke="#666" stroke-width="1"/>
 <path d="M6.5,2L8.5,0.5H12.5V5" fill="none" stroke="#666" stroke-width="1"/>
 <path d="M7.5,8L9.2,10L12.5,6" fill="none" stroke="#666" stroke-width="1.2"/>
</svg>
<div class="sl" style="left:193px">中文(中国)</div>
<svg style="left:349px;top:771px" width="12" height="12" viewBox="0 0 12 12">
 <path d="M4,3L6,1L8,3Z" fill="#666"/>
 <path d="M1,5.5H11M0,8.5H12M1,11.5H11" stroke="#666" stroke-width="1"/>
</svg>
<div class="sl" style="left:365px">备注</div>
<svg style="left:410px;top:771px" width="13" height="12" viewBox="0 0 13 12">
 <path d="M0,0H13V8H6L3,11.5V8H0Z" fill="#666"/>
</svg>
<div class="sl" style="left:426px">批注</div>
<div class="a" style="left:469px;top:766px;width:38px;height:20px;background:#c6c6c6"></div>
<svg style="left:481px;top:770px" width="14" height="13" viewBox="0 0 14 13">
 <rect x="0.5" y="0.5" width="13" height="12" fill="none" stroke="#555" stroke-width="1"/>
 <path d="M3.5,1V12" stroke="#555" stroke-width="1"/>
 <rect x="5.5" y="3.5" width="6" height="4" fill="none" stroke="#555" stroke-width="1"/>
 <path d="M5,10H12" stroke="#555" stroke-width="1"/>
</svg>
<svg style="left:519px;top:770px" width="14" height="13" viewBox="0 0 14 13">
 <rect x="0.5" y="0.5" width="5" height="4.5" fill="none" stroke="#555" stroke-width="1"/>
 <rect x="8.5" y="0.5" width="5" height="4.5" fill="none" stroke="#555" stroke-width="1"/>
 <rect x="0.5" y="7.5" width="5" height="4.5" fill="none" stroke="#555" stroke-width="1"/>
 <rect x="8.5" y="7.5" width="5" height="4.5" fill="none" stroke="#555" stroke-width="1"/>
</svg>
<svg style="left:557px;top:770px" width="13" height="13" viewBox="0 0 13 13">
 <path d="M0.5,0.5H5L6.5,1.5L8,0.5H12.5V11H8L6.5,12.5L5,11H0.5Z" fill="none" stroke="#555" stroke-width="1"/>
 <path d="M6.5,1.5V12" stroke="#555" stroke-width="1"/>
 <path d="M2,3.5H5M2,5.5H5M2,7.5H5M8,3.5H11M8,5.5H11M8,7.5H11" stroke="#555" stroke-width="1"/>
</svg>
<svg style="left:596px;top:770px" width="13" height="13" viewBox="0 0 13 13">
 <path d="M0,1H13" stroke="#555" stroke-width="2"/>
 <path d="M1.5,2V7.5H11.5V2" fill="none" stroke="#555" stroke-width="1"/>
 <path d="M4,4.5H9" stroke="#555" stroke-width="1"/>
 <path d="M6.5,8V12M4,12.5H9" stroke="#555" stroke-width="1"/>
</svg>
<div class="a" style="left:626px;top:776px;width:6px;height:2px;background:#555"></div>
<div class="a" style="left:636px;top:776px;width:101px;height:1px;background:#999"></div>
<div class="a" style="left:686px;top:773px;width:1px;height:7px;background:#999"></div>
<div class="a" style="left:657px;top:771px;width:4px;height:11px;background:#555"></div>
<svg style="left:740px;top:772px" width="9" height="9" viewBox="0 0 9 9"><path d="M4.5,0V9M0,4.5H9" stroke="#555" stroke-width="2"/></svg>
<div class="sl" style="left:763px;top:769px;font-size:13px;color:#555">49%</div>
<div class="a" style="left:738px;top:784px;width:53px;height:1px;border-top:1px dotted #888"></div>
<svg style="left:802px;top:771px" width="14" height="13" viewBox="0 0 14 13">
 <rect x="0.5" y="0.5" width="13" height="12" fill="none" stroke="#666" stroke-width="1"/>
 <path d="M7,1V5M5,3L7,1L9,3M7,12V8M5,10L7,12L9,10M1,6.5H4M13,6.5H10" fill="none" stroke="#666" stroke-width="1"/>
</svg>

<!-- STATUS_CONTENT -->
</body></html>
